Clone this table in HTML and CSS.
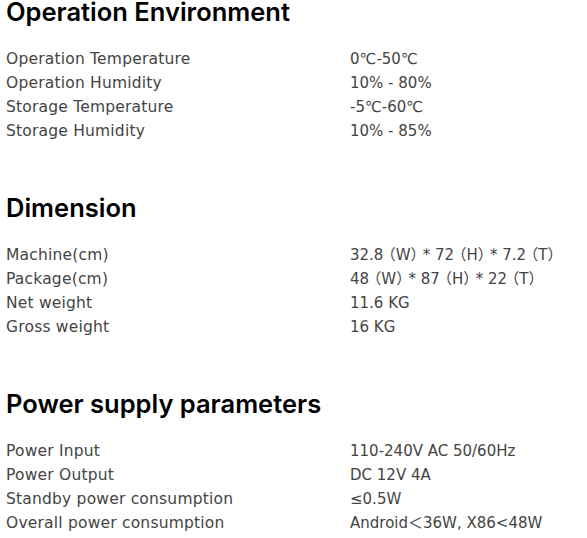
FILE: index.html
```html
<!DOCTYPE html>
<html lang="en">
<head>
<meta charset="utf-8">
<title>Specifications</title>
<link rel="stylesheet" href="styles.css">
</head>
<body>
<main class="specs">
  <section class="spec-section">
    <h2 class="spec-title">Operation Environment</h2>
    <dl class="spec-list">
      <div class="spec-row"><dt>Operation Temperature</dt><dd>0℃-50℃</dd></div>
      <div class="spec-row"><dt>Operation Humidity</dt><dd>10% - 80%</dd></div>
      <div class="spec-row"><dt>Storage Temperature</dt><dd>-5℃-60℃</dd></div>
      <div class="spec-row"><dt>Storage Humidity</dt><dd>10% - 85%</dd></div>
    </dl>
  </section>
  <section class="spec-section">
    <h2 class="spec-title">Dimension</h2>
    <dl class="spec-list">
      <div class="spec-row"><dt>Machine(cm)</dt><dd class="dims">32.8 （W） * 72 （H） * 7.2 （T）</dd></div>
      <div class="spec-row"><dt>Package(cm)</dt><dd class="dims">48 （W） * 87 （H） * 22 （T）</dd></div>
      <div class="spec-row"><dt>Net weight</dt><dd>11.6 KG</dd></div>
      <div class="spec-row"><dt>Gross weight</dt><dd>16 KG</dd></div>
    </dl>
  </section>
  <section class="spec-section">
    <h2 class="spec-title">Power supply parameters</h2>
    <dl class="spec-list">
      <div class="spec-row"><dt>Power Input</dt><dd>110-240V AC 50/60Hz</dd></div>
      <div class="spec-row"><dt>Power Output</dt><dd>DC 12V 4A</dd></div>
      <div class="spec-row"><dt>Standby power consumption</dt><dd>≤0.5W</dd></div>
      <div class="spec-row"><dt>Overall power consumption</dt><dd>Android＜36W, X86&lt;48W</dd></div>
    </dl>
  </section>
</main>
</body>
</html>
```

FILE: styles.css
```css
html, body {
  margin: 0;
  padding: 0;
  background: #ffffff;
}

body {
  font-family: "DejaVu Sans", "Noto Sans CJK SC", sans-serif;
  color: #444444;
}

.specs {
  display: flex;
  flex-direction: column;
  gap: 53px;
  padding: 0 6px;
}

.spec-title {
  margin: -3px 0 20px 0;
  font-family: Inter, "Noto Sans", sans-serif;
  font-size: 25.5px;
  line-height: 30px;
  font-weight: 600;
  color: #000000;
}

.spec-list {
  margin: 0;
  display: flex;
  flex-direction: column;
}

.spec-row {
  display: grid;
  grid-template-columns: 344px 1fr;
  line-height: 24px;
}

.spec-row dt,
.spec-row dd {
  margin: 0;
  white-space: nowrap;
}

.spec-row dt {
  font-size: 15.5px;
  letter-spacing: 0.2px;
}

.spec-row dd {
  font-size: 15px;
}

.spec-row .dims {
  font-feature-settings: "halt" 1;
}
```
